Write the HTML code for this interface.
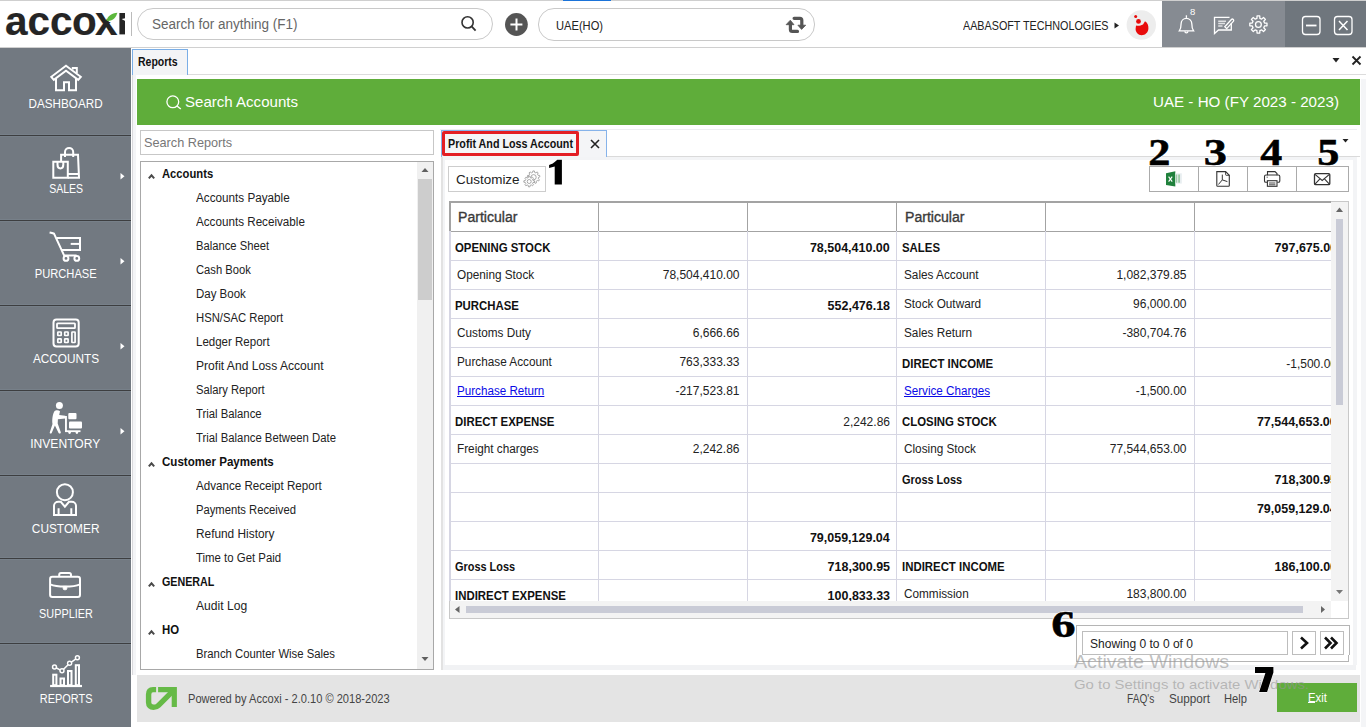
<!DOCTYPE html>
<html><head><meta charset="utf-8"><title>Accoxi Reports</title>
<style>html,body{margin:0;padding:0;width:1366px;height:727px;overflow:hidden;background:#fff;font-family:'Liberation Sans', sans-serif}</style></head>
<body>
<div style="position:relative;width:1366px;height:727px;overflow:hidden">
<div style="position:absolute;left:0px;top:0px;width:1366px;height:47px;background:#fff"></div>
<div style="position:absolute;left:0px;top:0px;width:1366px;height:1px;background:#cfcfcf"></div>
<div style="position:absolute;left:563px;top:0px;width:48px;height:1px;background:#1a73d9"></div>
<div style="position:absolute;left:0px;top:47px;width:1366px;height:1px;background:#d0d0d0"></div>
<svg style="position:absolute;left:0;top:0" width="135" height="47">
<g font-family="Liberation Sans" font-weight="700" font-size="40.5" fill="#252525" stroke="#252525" stroke-width="0.15">
<text x="5" y="34.6">a</text><text x="27.6" y="34.6">c</text><text x="49.9" y="34.6">c</text><text x="72" y="34.6">o</text><text x="95" y="34.6">x</text></g>
<path d="M103 11 L120 11 L120 22 L109 22 Z" fill="#fff"/>
<path d="M106.6 21 C107.5 16 111.5 13.2 117.4 12.8 C116 17.5 113 21.6 106.6 21 Z" fill="#5cb83c"/>
<rect x="119.4" y="13" width="5.6" height="21.4" fill="#252525"/>
<path d="M121.6 18.9 L125.2 18.2 L125.2 21 Z" fill="#fff"/>
</svg>
<div style="position:absolute;left:131px;top:12px;width:1px;height:24px;background:#bbb"></div>
<div style="position:absolute;left:137px;top:8px;width:356px;height:32px;border:1px solid #c9c9c9;border-radius:16px;box-sizing:border-box;background:#fff"></div>
<svg style="position:absolute;left:458;top:13px" width="22" height="22"><circle cx="9.6" cy="9.4" r="5.6" stroke="#333" stroke-width="1.6" fill="none"/><line x1="13.6" y1="13.4" x2="17.6" y2="17.6" stroke="#333" stroke-width="1.8"/></svg>
<svg style="position:absolute;left:504px;top:13px" width="24" height="24"><circle cx="12.4" cy="11.5" r="11.4" fill="#555"/><rect x="11.5" y="5.5" width="2" height="12" fill="#fff"/><rect x="6.4" y="10.5" width="12" height="2" fill="#fff"/></svg>
<div style="position:absolute;left:538px;top:8px;width:277px;height:33px;border:1px solid #c9c9c9;border-radius:16px;box-sizing:border-box;background:#fff"></div>
<svg style="position:absolute;left:780px;top:12px" width="32" height="26">
<path d="M10.4 12 V17.5 C10.4 18.6 11.2 19.4 12.3 19.4 H17.5" stroke="#555" stroke-width="3.2" fill="none" stroke-linecap="round"/>
<path d="M6.1 12.7 L10.3 8.2 L14 12.7 Z" fill="#555" stroke="#555" stroke-width="0.8" stroke-linejoin="round"/>
<path d="M14.1 6.3 H19.9 C21 6.3 21.8 7.1 21.8 8.2 V14" stroke="#555" stroke-width="3.2" fill="none" stroke-linecap="round"/>
<path d="M17.9 13.2 L21.6 17.4 L25.7 13.2 Z" fill="#555" stroke="#555" stroke-width="0.8" stroke-linejoin="round"/>
</svg>
<svg style="position:absolute;left:1113px;top:21px" width="8" height="9"><path d="M1.5 1.5 L6 4.5 L1.5 7.5Z" fill="#222"/></svg>
<svg style="position:absolute;left:1126px;top:10px" width="31" height="31"><circle cx="15.3" cy="15" r="14.7" fill="#ededed"/>
<path d="M10 15.5 C11.5 16 14.5 16 17 14.5 L19 11.2 C21.5 12.5 22.6 15.5 22.4 18.5 C22.2 22.5 19.2 25.2 15.6 25.2 C12 25.2 9.6 22.2 9.6 19 Z" fill="#e80b0b"/>
<circle cx="12.5" cy="11.4" r="2.4" fill="#e80b0b"/><circle cx="9.7" cy="6.5" r="1.5" fill="#e80b0b"/></svg>
<div style="position:absolute;left:1162px;top:1px;width:123px;height:46px;background:#868b92"></div>
<div style="position:absolute;left:1285px;top:1px;width:81px;height:46px;background:#6f767d"></div>
<svg style="position:absolute;left:1162px;top:1px" width="204" height="46">
<g stroke="#fff" stroke-width="1.3" fill="none">
<path d="M24.4 14.3 V16.9"/>
<path d="M17.3 29.9 C18.6 28 19.1 26.5 19.1 22.8 C19.1 19.6 21.5 17.4 24.4 17.4 C27.3 17.4 29.8 19.6 29.8 22.8 C29.8 26.5 30.3 28 31.6 29.9 Z"/>
<path d="M22.9 30.3 A1.5 1.6 0 0 0 25.9 30.3"/>
<path d="M67.5 16.4 H52.5 V32.5 L56.5 29 H69.3 V22"/>
<path d="M56.2 20.3 H64 M56.2 22.5 H63 M56.2 24.9 H60.5" stroke-width="1.5" stroke-opacity="0.75"/>
<path d="M62.8 25.8 L69.4 18.5 C69.9 18 70.8 18 71.3 18.5 C71.8 19 71.8 19.9 71.3 20.4 L64.7 27.6 Z"/>
<path d="M94.93 17.37 L95.04 14.91 L97.76 14.91 L97.87 17.37 L99.69 18.13 L101.51 16.46 L103.44 18.39 L101.77 20.21 L102.53 22.03 L104.99 22.14 L104.99 24.86 L102.53 24.97 L101.77 26.79 L103.44 28.61 L101.51 30.54 L99.69 28.87 L97.87 29.63 L97.76 32.09 L95.04 32.09 L94.93 29.63 L93.11 28.87 L91.29 30.54 L89.36 28.61 L91.03 26.79 L90.27 24.97 L87.81 24.86 L87.81 22.14 L90.27 22.03 L91.03 20.21 L89.36 18.39 L91.29 16.46 L93.11 18.13Z" stroke-linejoin="round"/><circle cx="96.4" cy="23.5" r="2.9"/>
<rect x="140.5" y="15.5" width="17.5" height="18" rx="3"/>
<path d="M144 24.5 H154.5" stroke-width="1.8"/>
<rect x="172.5" y="15.5" width="17.5" height="18" rx="3"/>
<path d="M177 20 L185.5 29 M185.5 20 L177 29" stroke-width="1.5"/>
</g>
<text x="28" y="14" font-family="Liberation Sans" font-size="9.5" fill="#fff">8</text>
</svg>
<div style="position:absolute;left:0px;top:48px;width:131px;height:679px;background:#727981"></div>
<div style="position:absolute;left:0px;top:134px;width:131px;height:1px;background:#778089"></div>
<div style="position:absolute;left:0px;top:136px;width:131px;height:1px;background:#778089"></div>
<div style="position:absolute;left:0px;top:135px;width:131px;height:1px;background:#3d3e40"></div>
<div style="position:absolute;left:0px;top:219px;width:131px;height:1px;background:#778089"></div>
<div style="position:absolute;left:0px;top:221px;width:131px;height:1px;background:#778089"></div>
<div style="position:absolute;left:0px;top:220px;width:131px;height:1px;background:#3d3e40"></div>
<div style="position:absolute;left:0px;top:304px;width:131px;height:1px;background:#778089"></div>
<div style="position:absolute;left:0px;top:306px;width:131px;height:1px;background:#778089"></div>
<div style="position:absolute;left:0px;top:305px;width:131px;height:1px;background:#3d3e40"></div>
<div style="position:absolute;left:0px;top:389px;width:131px;height:1px;background:#778089"></div>
<div style="position:absolute;left:0px;top:391px;width:131px;height:1px;background:#778089"></div>
<div style="position:absolute;left:0px;top:390px;width:131px;height:1px;background:#3d3e40"></div>
<div style="position:absolute;left:0px;top:474px;width:131px;height:1px;background:#778089"></div>
<div style="position:absolute;left:0px;top:476px;width:131px;height:1px;background:#778089"></div>
<div style="position:absolute;left:0px;top:475px;width:131px;height:1px;background:#3d3e40"></div>
<div style="position:absolute;left:0px;top:557px;width:131px;height:1px;background:#778089"></div>
<div style="position:absolute;left:0px;top:559px;width:131px;height:1px;background:#778089"></div>
<div style="position:absolute;left:0px;top:558px;width:131px;height:1px;background:#3d3e40"></div>
<div style="position:absolute;left:0px;top:642px;width:131px;height:1px;background:#778089"></div>
<div style="position:absolute;left:0px;top:644px;width:131px;height:1px;background:#778089"></div>
<div style="position:absolute;left:0px;top:643px;width:131px;height:1px;background:#3d3e40"></div>
<svg style="position:absolute;left:119px;top:171.5px" width="8" height="9"><path d="M1.5 1 L5.5 4.2 L1.5 7.5Z" fill="#fff"/></svg>
<svg style="position:absolute;left:119px;top:256.59999999999997px" width="8" height="9"><path d="M1.5 1 L5.5 4.2 L1.5 7.5Z" fill="#fff"/></svg>
<svg style="position:absolute;left:119px;top:341.5px" width="8" height="9"><path d="M1.5 1 L5.5 4.2 L1.5 7.5Z" fill="#fff"/></svg>
<svg style="position:absolute;left:119px;top:426.59999999999997px" width="8" height="9"><path d="M1.5 1 L5.5 4.2 L1.5 7.5Z" fill="#fff"/></svg>
<svg style="position:absolute;left:0;top:0" width="131" height="727"><g stroke="#fff" stroke-width="2" fill="none" stroke-linejoin="miter">
<path d="M53.8 79.8 L51.3 76.8 L66 65.8 L80.8 76.8 L78.2 79.8 L66 70.8 Z"/><path d="M56 78.5 V90.3 H64 V82.2 H69 V90.3 H76 V78.5"/><path d="M72.8 69.5 V68 H76.8 V73"/>
<path d="M53.3 161.7 H67.8 V177.7 H53.3 Z"/><path d="M57.5 162 V164.8 C57.5 169.6 63.3 169.6 63.3 164.8 V162"/><path d="M61.1 161.7 V154.7 H78 L79 177.7 H67.8"/><path d="M67.8 174 H78.8"/><path d="M65 157 V152 C65 146.5 73.2 146.5 73.2 152 V157"/>
<path d="M49.6 232.4 C51.5 232.8 53 232.9 54 233.6 L64.2 255.6 H76.6"/><path d="M56.6 237.9 H80 V250 H61.5"/><path d="M70.7 243.9 H80"/><circle cx="66" cy="258.4" r="2.4"/><circle cx="76.8" cy="258.4" r="2.4"/>
<rect x="53.5" y="319.4" width="25.2" height="27.2" rx="3"/><rect x="57" y="323.3" width="18" height="4.9" rx="0.6" stroke-width="1.8"/><g stroke-width="1.7"><rect x="57.8" y="332" width="3.4" height="3.5" rx="0.5"/><rect x="64.7" y="332" width="3.4" height="3.5" rx="0.5"/><rect x="57.8" y="338.9" width="3.4" height="3.6" rx="0.5"/><rect x="64.7" y="338.9" width="3.4" height="3.6" rx="0.5"/><rect x="71.9" y="332" width="3.2" height="10.5" rx="0.5"/></g>
<circle cx="64.9" cy="492.2" r="8"/><path d="M54 515.1 V505.8 C54 503.5 56 501.8 58.3 501.8 H60.8 L64.9 506.6 L69 501.8 H71.7 C74 501.8 76 503.5 76 505.8 V515.1 Z"/><path d="M58.6 515 V508.3 M71.3 515 V508.3"/>
<rect x="50.1" y="576.7" width="29.9" height="20.3" rx="2.2"/><path d="M50.2 584.3 C57 587.3 73 587.3 80 584.3"/><path d="M59.2 576.5 V574.8 C59.2 573.6 60 572.9 61 572.9 H69.2 C70.3 572.9 71 573.6 71 574.8 V576.5"/><path d="M63.2 586.4 V588.6 C63.2 589.3 63.6 589.7 64.3 589.7 H65.7 C66.4 589.7 66.8 589.3 66.8 588.6 V586.4 Z" fill="#fff" stroke-width="1"/>
<path d="M50.1 686 H82" stroke-width="2.2"/><rect x="53.2" y="674.7" width="3.2" height="10.5"/><rect x="60.5" y="678.5" width="3.5" height="6.7"/><rect x="68" y="671" width="3.5" height="14.2"/><rect x="75.8" y="665.2" width="3.2" height="20"/>
<path d="M54.5 667 L62 670.8 L69.6 663.3 L77.4 657.8" stroke-width="1.5"/>
</g>
<g fill="#fff"><circle cx="54.5" cy="667" r="2.7"/><circle cx="62" cy="670.8" r="2.7"/><circle cx="69.6" cy="663.3" r="2.7"/><circle cx="77.4" cy="657.8" r="2.7"/></g>
<g fill="#727981"><circle cx="54.5" cy="667" r="1.2"/><circle cx="62" cy="670.8" r="1.2"/><circle cx="69.6" cy="663.3" r="1.2"/><circle cx="77.4" cy="657.8" r="1.2"/></g>
<g fill="#fff">
<circle cx="59.4" cy="405.4" r="3.5"/>
<path d="M54.6 411 C55.5 410.2 58.5 410 60 411.2 L59.2 415 L65.3 415.8 V418.6 L57.9 419.2 L57.7 423.5 L60.8 432.2 C61 433.6 59.2 434 58.6 432.9 L54.9 425.6 L51.7 433 C51 434.1 49.3 433.6 49.8 432.3 L52.5 424 C51.9 420 52.5 414 54.6 411 Z"/>
<rect x="65" y="416" width="1.9" height="16"/><rect x="65" y="430.3" width="15.5" height="1.8"/>
<circle cx="69.6" cy="432.6" r="1.3"/><circle cx="76.9" cy="432.6" r="1.3"/>
<rect x="68.3" y="413" width="8.2" height="6.3" rx="1"/><rect x="69" y="421.5" width="13" height="7" rx="1"/>
</g></svg>
<div style="position:absolute;left:131px;top:48px;width:1235px;height:679px;background:#fff"></div>
<div style="position:absolute;left:132px;top:75px;width:1px;height:600px;background:#d9d9dc"></div>
<div style="position:absolute;left:133px;top:75px;width:3px;height:600px;background:#f4f5f7"></div>
<div style="position:absolute;left:132px;top:49px;width:56px;height:26px;background:#f3f4f6;border:1px solid #7aaee6;border-bottom:none;box-sizing:border-box"></div>
<div style="position:absolute;left:188px;top:74px;width:1178px;height:1px;background:#dcdcdc"></div>
<svg style="position:absolute;left:1330px;top:55px" width="36" height="12"><path d="M2.5 3 H9.5 L6 7.5Z" fill="#222"/><path d="M22.5 1.5 L30.5 9.5 M30.5 1.5 L22.5 9.5" stroke="#222" stroke-width="1.8"/></svg>
<div style="position:absolute;left:137px;top:79px;width:1223px;height:46px;background:#5fad3a"></div>
<svg style="position:absolute;left:164px;top:93px" width="20" height="20"><circle cx="8.8" cy="8.8" r="5.9" stroke="#fff" stroke-width="1.3" fill="none"/><line x1="13" y1="13" x2="16.8" y2="16" stroke="#fff" stroke-width="1.4"/></svg>
<div style="position:absolute;left:1361px;top:79px;width:5px;height:648px;background:#f4f5f7"></div>
<div style="position:absolute;left:140px;top:130px;width:294px;height:25px;border:1px solid #c7c7c7;box-sizing:border-box;background:#fff"></div>
<div style="position:absolute;left:140px;top:161px;width:294px;height:509px;border:1px solid #a8a8a8;box-sizing:border-box;background:#fff"></div>
<div style="position:absolute;left:417px;top:162px;width:16px;height:507px;background:#f0f0f0"></div>
<div style="position:absolute;left:418px;top:179px;width:14px;height:121px;background:#cdcdcd"></div>
<svg style="position:absolute;left:417px;top:164px" width="16" height="505"><path d="M4.5 8 L8 4 L11.5 8Z" fill="#606060"/><path d="M4.5 493 L8 497 L11.5 493Z" fill="#606060"/></svg>
<svg style="position:absolute;left:140px;top:160px" width="30" height="500"><path d="M8.8 18.3 L11.5 15.3 L14.2 18.3" stroke="#4a4a4a" stroke-width="2" fill="none"/><path d="M8.8 306.3 L11.5 303.3 L14.2 306.3" stroke="#4a4a4a" stroke-width="2" fill="none"/><path d="M8.8 426.3 L11.5 423.3 L14.2 426.3" stroke="#4a4a4a" stroke-width="2" fill="none"/><path d="M8.8 474.3 L11.5 471.3 L14.2 474.3" stroke="#4a4a4a" stroke-width="2" fill="none"/></svg>
<div style="position:absolute;left:440px;top:129px;width:917px;height:1px;background:#eeeff1"></div>
<div style="position:absolute;left:441px;top:130px;width:166px;height:27px;background:#f4f5f7;border:1px solid #86b3ea;border-bottom:none;box-sizing:border-box"></div>
<div style="position:absolute;left:607px;top:156px;width:753px;height:1px;background:#dadada"></div>
<div style="position:absolute;left:442px;top:131px;width:137px;height:24.5px;border:3px solid #e31e24;border-radius:2px;box-sizing:border-box"></div>
<svg style="position:absolute;left:589px;top:138px" width="12" height="12"><path d="M2 2 L10 10 M10 2 L2 10" stroke="#222" stroke-width="1.6"/></svg>
<div style="position:absolute;left:441px;top:157px;width:2px;height:513px;background:#e2e2e2"></div>
<div style="position:absolute;left:443px;top:157px;width:2px;height:508px;background:#f3f4f6"></div>
<div style="position:absolute;left:443px;top:157px;width:910px;height:2.5px;background:#f3f4f6"></div>
<div style="position:absolute;left:443px;top:665px;width:913px;height:5px;background:#f1f2f4"></div>
<div style="position:absolute;left:1353px;top:157px;width:4px;height:508px;background:#f3f4f6"></div>
<div style="position:absolute;left:448px;top:166px;width:98px;height:26px;border:1px solid #cdcdcd;box-sizing:border-box;background:#fff"></div>
<svg style="position:absolute;left:515px;top:164px" width="30" height="30"><g stroke="#9a9a9a" stroke-width="0.85" stroke-linejoin="round"><path d="M17.58 8.41 L17.85 6.94 L19.35 6.94 L19.62 8.41 L20.90 8.87 L22.05 7.93 L23.19 8.89 L22.46 10.18 L23.14 11.36 L24.63 11.38 L24.89 12.85 L23.50 13.37 L23.26 14.71 L24.39 15.68 L23.64 16.97 L22.24 16.48 L21.20 17.36 L21.44 18.82 L20.04 19.33 L19.28 18.05 L17.92 18.05 L17.16 19.33 L15.76 18.82 L16.00 17.36 L14.96 16.48 L13.56 16.97 L12.81 15.68 L13.94 14.71 L13.70 13.37 L12.31 12.85 L12.57 11.38 L14.06 11.36 L14.74 10.18 L14.01 8.89 L15.15 7.93 L16.30 8.87Z" fill="#fff"/><circle cx="18.6" cy="13.2" r="2.6" fill="none"/><path d="M13.27 13.61 L13.48 12.15 L14.92 12.15 L15.13 13.61 L16.29 14.09 L17.48 13.21 L18.49 14.22 L17.61 15.41 L18.09 16.57 L19.55 16.78 L19.55 18.22 L18.09 18.43 L17.61 19.59 L18.49 20.78 L17.48 21.79 L16.29 20.91 L15.13 21.39 L14.92 22.85 L13.48 22.85 L13.27 21.39 L12.11 20.91 L10.92 21.79 L9.91 20.78 L10.79 19.59 L10.31 18.43 L8.85 18.22 L8.85 16.78 L10.31 16.57 L10.79 15.41 L9.91 14.22 L10.92 13.21 L12.11 14.09Z" fill="#fff"/><circle cx="14.2" cy="17.5" r="2" fill="none"/></g></svg>
<div style="position:absolute;left:1149px;top:166px;width:200px;height:26px;border:1px solid #ababab;box-sizing:border-box;background:#fff"></div>
<div style="position:absolute;left:1198px;top:166px;width:1px;height:26px;background:#ababab"></div>
<div style="position:absolute;left:1247px;top:166px;width:1px;height:26px;background:#ababab"></div>
<div style="position:absolute;left:1296px;top:166px;width:1px;height:26px;background:#ababab"></div>
<svg style="position:absolute;left:1149px;top:166px" width="200" height="26">
<path d="M17 7.2 L26.3 5.3 V20.6 L17 19 Z" fill="#20813c"/><rect x="26.3" y="7.3" width="6.5" height="10.3" fill="#e8eef0"/><rect x="26.6" y="8.5" width="1.6" height="8.2" fill="#9fcda8"/><rect x="29.2" y="8.5" width="1.8" height="8.2" fill="#9fcda8"/>
<path d="M19.6 10.6 L23.2 15.6 M23.2 10.6 L19.6 15.6" stroke="#fff" stroke-width="1.1"/>
<g stroke="#333" stroke-width="1.1" fill="none">
<path d="M67.8 5.6 H76.6 L80.3 9.3 V19.5 C80.3 20 80 20.2 79.5 20.2 H68.6 C68.1 20.2 67.8 19.9 67.8 19.4 Z"/><path d="M76.6 5.6 V8.7 C76.6 9 76.8 9.3 77.1 9.3 H80.3" stroke-width="0.9"/>
<path d="M73.3 8.6 V13.9 L69.4 18.5 M73.3 13.9 L78.4 15.6" stroke-width="1"/>
<path d="M118.5 9.2 V5.6 H126 L128 7.6 V9.2"/><path d="M118 16.3 H116.8 C116 16.3 115.5 15.8 115.5 15 V10.5 C115.5 9.6 116.1 9 117 9 H129.3 C130.2 9 130.8 9.6 130.8 10.5 V15 C130.8 15.8 130.3 16.3 129.5 16.3 H128.3"/><rect x="118.4" y="14.7" width="9.6" height="5.6" fill="#fff"/><path d="M120 17 H126.4 M120 18.8 H126.4" stroke-width="0.9"/><path d="M117.5 11.2 H119" stroke-width="0.7"/>
<rect x="165.5" y="7.6" width="15.3" height="11.1" rx="1.2" stroke-width="1.3"/><path d="M166 8.3 L173.2 14.5 L180.4 8.3 M166 18.2 L170.7 13.2 M180.4 18.2 L175.7 13.2"/>
</g></svg>
<svg style="position:absolute;left:1342px;top:138px" width="8" height="6"><path d="M0.5 1 H6.5 L3.5 4.5Z" fill="#222"/></svg>
<div style="position:absolute;left:449px;top:201px;width:900px;height:418px;border:1px solid #c8c8c8;box-sizing:border-box;background:#fff"></div>
<div style="position:absolute;left:449px;top:201px;width:882px;height:2px;background:#a3a3a3"></div>
<div style="position:absolute;left:449px;top:230.5px;width:882px;height:1.5px;background:#a3a3a3"></div>
<div style="position:absolute;left:449px;top:201px;width:1.5px;height:30px;background:#a3a3a3"></div>
<div style="position:absolute;left:598px;top:201px;width:1px;height:30px;background:#a3a3a3"></div>
<div style="position:absolute;left:747px;top:201px;width:1px;height:30px;background:#a3a3a3"></div>
<div style="position:absolute;left:896px;top:201px;width:1px;height:30px;background:#a3a3a3"></div>
<div style="position:absolute;left:1045px;top:201px;width:1px;height:30px;background:#a3a3a3"></div>
<div style="position:absolute;left:1194px;top:201px;width:1px;height:30px;background:#a3a3a3"></div>
<div style="position:absolute;left:450px;top:260px;width:881px;height:1px;background:#d6d6e3"></div>
<div style="position:absolute;left:450px;top:289px;width:881px;height:1px;background:#d6d6e3"></div>
<div style="position:absolute;left:450px;top:318px;width:881px;height:1px;background:#d6d6e3"></div>
<div style="position:absolute;left:450px;top:347px;width:881px;height:1px;background:#d6d6e3"></div>
<div style="position:absolute;left:450px;top:376px;width:881px;height:1px;background:#d6d6e3"></div>
<div style="position:absolute;left:450px;top:405px;width:881px;height:1px;background:#d6d6e3"></div>
<div style="position:absolute;left:450px;top:434px;width:881px;height:1px;background:#d6d6e3"></div>
<div style="position:absolute;left:450px;top:463px;width:881px;height:1px;background:#d6d6e3"></div>
<div style="position:absolute;left:450px;top:492px;width:881px;height:1px;background:#d6d6e3"></div>
<div style="position:absolute;left:450px;top:521px;width:881px;height:1px;background:#d6d6e3"></div>
<div style="position:absolute;left:450px;top:550px;width:881px;height:1px;background:#d6d6e3"></div>
<div style="position:absolute;left:450px;top:579px;width:881px;height:1px;background:#d6d6e3"></div>
<div style="position:absolute;left:598px;top:231px;width:1px;height:370px;background:#d6d6e3"></div>
<div style="position:absolute;left:747px;top:231px;width:1px;height:370px;background:#d6d6e3"></div>
<div style="position:absolute;left:896px;top:231px;width:1px;height:370px;background:#d6d6e3"></div>
<div style="position:absolute;left:1045px;top:231px;width:1px;height:370px;background:#d6d6e3"></div>
<div style="position:absolute;left:1194px;top:231px;width:1px;height:370px;background:#d6d6e3"></div>
<div style="position:absolute;left:449px;top:231px;width:1.5px;height:370px;background:#d6d6e3"></div>
<div style="position:absolute;left:152.00px;top:17.17px;font-family:'Liberation Sans', sans-serif;font-size:14px;font-weight:400;color:#666;line-height:1;white-space:nowrap;transform:scaleX(0.9638);transform-origin:left top;">Search for anything (F1)</div>
<div style="position:absolute;left:555.50px;top:18.50px;font-family:'Liberation Sans', sans-serif;font-size:13px;font-weight:400;color:#222;line-height:1;white-space:nowrap;transform:scaleX(0.8562);transform-origin:left top;">UAE(HO)</div>
<div style="position:absolute;left:962.50px;top:19.20px;font-family:'Liberation Sans', sans-serif;font-size:13px;font-weight:400;color:#222;line-height:1;white-space:nowrap;transform:scaleX(0.8277);transform-origin:left top;">AABASOFT TECHNOLOGIES</div>
<div style="position:absolute;left:26.11px;top:97.57px;font-family:'Liberation Sans', sans-serif;font-size:12.5px;font-weight:400;color:#fff;line-height:1;white-space:nowrap;transform:scaleX(0.9345);transform-origin:center top;">DASHBOARD</div>
<div style="position:absolute;left:45.54px;top:183.17px;font-family:'Liberation Sans', sans-serif;font-size:12.5px;font-weight:400;color:#fff;line-height:1;white-space:nowrap;transform:scaleX(0.8434);transform-origin:center top;">SALES</div>
<div style="position:absolute;left:30.97px;top:268.27px;font-family:'Liberation Sans', sans-serif;font-size:12.5px;font-weight:400;color:#fff;line-height:1;white-space:nowrap;transform:scaleX(0.8925);transform-origin:center top;">PURCHASE</div>
<div style="position:absolute;left:30.62px;top:353.17px;font-family:'Liberation Sans', sans-serif;font-size:12.5px;font-weight:400;color:#fff;line-height:1;white-space:nowrap;transform:scaleX(0.9450);transform-origin:center top;">ACCOUNTS</div>
<div style="position:absolute;left:29.46px;top:438.27px;font-family:'Liberation Sans', sans-serif;font-size:12.5px;font-weight:400;color:#fff;line-height:1;white-space:nowrap;transform:scaleX(0.9657);transform-origin:center top;">INVENTORY</div>
<div style="position:absolute;left:30.04px;top:523.17px;font-family:'Liberation Sans', sans-serif;font-size:12.5px;font-weight:400;color:#fff;line-height:1;white-space:nowrap;transform:scaleX(0.9479);transform-origin:center top;">CUSTOMER</div>
<div style="position:absolute;left:34.78px;top:608.27px;font-family:'Liberation Sans', sans-serif;font-size:12.5px;font-weight:400;color:#fff;line-height:1;white-space:nowrap;transform:scaleX(0.8683);transform-origin:center top;">SUPPLIER</div>
<div style="position:absolute;left:35.60px;top:692.67px;font-family:'Liberation Sans', sans-serif;font-size:12.5px;font-weight:400;color:#fff;line-height:1;white-space:nowrap;transform:scaleX(0.8754);transform-origin:center top;">REPORTS</div>
<div style="position:absolute;left:138.30px;top:56.43px;font-family:'Liberation Sans', sans-serif;font-size:12px;font-weight:700;color:#111;line-height:1;white-space:nowrap;transform:scaleX(0.8755);transform-origin:left top;">Reports</div>
<div style="position:absolute;left:184.70px;top:94.44px;font-family:'Liberation Sans', sans-serif;font-size:15px;font-weight:400;color:#fff;line-height:1;white-space:nowrap;transform:scaleX(1.0037);transform-origin:left top;">Search Accounts</div>
<div style="position:absolute;left:1154.83px;top:94.44px;font-family:'Liberation Sans', sans-serif;font-size:15px;font-weight:400;color:#fff;line-height:1;white-space:nowrap;transform:scaleX(1.0110);transform-origin:right top;">UAE - HO (FY 2023 - 2023)</div>
<div style="position:absolute;left:144.30px;top:136.30px;font-family:'Liberation Sans', sans-serif;font-size:13px;font-weight:400;color:#777;line-height:1;white-space:nowrap;transform:scaleX(0.9764);transform-origin:left top;">Search Reports</div>
<div style="position:absolute;left:162.20px;top:167.00px;font-family:'Liberation Sans', sans-serif;font-size:13px;font-weight:700;color:#111;line-height:1;white-space:nowrap;transform:scaleX(0.8644);transform-origin:left top;">Accounts</div>
<div style="position:absolute;left:196.20px;top:191.97px;font-family:'Liberation Sans', sans-serif;font-size:12.5px;font-weight:400;color:#222;line-height:1;white-space:nowrap;transform:scaleX(0.9364);transform-origin:left top;">Accounts Payable</div>
<div style="position:absolute;left:196.20px;top:215.97px;font-family:'Liberation Sans', sans-serif;font-size:12.5px;font-weight:400;color:#222;line-height:1;white-space:nowrap;transform:scaleX(0.9329);transform-origin:left top;">Accounts Receivable</div>
<div style="position:absolute;left:196.20px;top:239.97px;font-family:'Liberation Sans', sans-serif;font-size:12.5px;font-weight:400;color:#222;line-height:1;white-space:nowrap;transform:scaleX(0.8978);transform-origin:left top;">Balance Sheet</div>
<div style="position:absolute;left:196.20px;top:263.97px;font-family:'Liberation Sans', sans-serif;font-size:12.5px;font-weight:400;color:#222;line-height:1;white-space:nowrap;transform:scaleX(0.8961);transform-origin:left top;">Cash Book</div>
<div style="position:absolute;left:196.20px;top:287.97px;font-family:'Liberation Sans', sans-serif;font-size:12.5px;font-weight:400;color:#222;line-height:1;white-space:nowrap;transform:scaleX(0.9188);transform-origin:left top;">Day Book</div>
<div style="position:absolute;left:196.20px;top:311.97px;font-family:'Liberation Sans', sans-serif;font-size:12.5px;font-weight:400;color:#222;line-height:1;white-space:nowrap;transform:scaleX(0.9030);transform-origin:left top;">HSN/SAC Report</div>
<div style="position:absolute;left:196.20px;top:335.97px;font-family:'Liberation Sans', sans-serif;font-size:12.5px;font-weight:400;color:#222;line-height:1;white-space:nowrap;transform:scaleX(0.9209);transform-origin:left top;">Ledger Report</div>
<div style="position:absolute;left:196.20px;top:359.97px;font-family:'Liberation Sans', sans-serif;font-size:12.5px;font-weight:400;color:#222;line-height:1;white-space:nowrap;transform:scaleX(0.9657);transform-origin:left top;">Profit And Loss Account</div>
<div style="position:absolute;left:196.20px;top:383.97px;font-family:'Liberation Sans', sans-serif;font-size:12.5px;font-weight:400;color:#222;line-height:1;white-space:nowrap;transform:scaleX(0.8975);transform-origin:left top;">Salary Report</div>
<div style="position:absolute;left:196.20px;top:407.97px;font-family:'Liberation Sans', sans-serif;font-size:12.5px;font-weight:400;color:#222;line-height:1;white-space:nowrap;transform:scaleX(0.9048);transform-origin:left top;">Trial Balance</div>
<div style="position:absolute;left:196.20px;top:431.97px;font-family:'Liberation Sans', sans-serif;font-size:12.5px;font-weight:400;color:#222;line-height:1;white-space:nowrap;transform:scaleX(0.9062);transform-origin:left top;">Trial Balance Between Date</div>
<div style="position:absolute;left:162.20px;top:455.00px;font-family:'Liberation Sans', sans-serif;font-size:13px;font-weight:700;color:#111;line-height:1;white-space:nowrap;transform:scaleX(0.8893);transform-origin:left top;">Customer Payments</div>
<div style="position:absolute;left:196.20px;top:479.97px;font-family:'Liberation Sans', sans-serif;font-size:12.5px;font-weight:400;color:#222;line-height:1;white-space:nowrap;transform:scaleX(0.9284);transform-origin:left top;">Advance Receipt Report</div>
<div style="position:absolute;left:196.20px;top:503.97px;font-family:'Liberation Sans', sans-serif;font-size:12.5px;font-weight:400;color:#222;line-height:1;white-space:nowrap;transform:scaleX(0.8995);transform-origin:left top;">Payments Received</div>
<div style="position:absolute;left:196.20px;top:527.97px;font-family:'Liberation Sans', sans-serif;font-size:12.5px;font-weight:400;color:#222;line-height:1;white-space:nowrap;transform:scaleX(0.9481);transform-origin:left top;">Refund History</div>
<div style="position:absolute;left:196.20px;top:551.97px;font-family:'Liberation Sans', sans-serif;font-size:12.5px;font-weight:400;color:#222;line-height:1;white-space:nowrap;transform:scaleX(0.9129);transform-origin:left top;">Time to Get Paid</div>
<div style="position:absolute;left:162.20px;top:575.00px;font-family:'Liberation Sans', sans-serif;font-size:13px;font-weight:700;color:#111;line-height:1;white-space:nowrap;transform:scaleX(0.8244);transform-origin:left top;">GENERAL</div>
<div style="position:absolute;left:196.20px;top:599.97px;font-family:'Liberation Sans', sans-serif;font-size:12.5px;font-weight:400;color:#222;line-height:1;white-space:nowrap;transform:scaleX(0.9692);transform-origin:left top;">Audit Log</div>
<div style="position:absolute;left:162.20px;top:623.00px;font-family:'Liberation Sans', sans-serif;font-size:13px;font-weight:700;color:#111;line-height:1;white-space:nowrap;transform:scaleX(0.8769);transform-origin:left top;">HO</div>
<div style="position:absolute;left:196.20px;top:647.97px;font-family:'Liberation Sans', sans-serif;font-size:12.5px;font-weight:400;color:#222;line-height:1;white-space:nowrap;transform:scaleX(0.9053);transform-origin:left top;">Branch Counter Wise Sales</div>
<div style="position:absolute;left:448.00px;top:137.63px;font-family:'Liberation Sans', sans-serif;font-size:12px;font-weight:700;color:#111;line-height:1;white-space:nowrap;transform:scaleX(0.8943);transform-origin:left top;">Profit And Loss Account</div>
<div style="position:absolute;left:456.30px;top:172.84px;font-family:'Liberation Sans', sans-serif;font-size:13.5px;font-weight:400;color:#222;line-height:1;white-space:nowrap;transform:scaleX(0.9972);transform-origin:left top;">Customize</div>
<div style="position:absolute;left:457.50px;top:210.47px;font-family:'Liberation Sans', sans-serif;font-size:14px;font-weight:400;color:#3a3a3a;line-height:1;white-space:nowrap;transform:scaleX(1.0044);transform-origin:left top;-webkit-text-stroke:0.35px #3a3a3a;">Particular</div>
<div style="position:absolute;left:904.50px;top:210.47px;font-family:'Liberation Sans', sans-serif;font-size:14px;font-weight:400;color:#3a3a3a;line-height:1;white-space:nowrap;transform:scaleX(1.0044);transform-origin:left top;-webkit-text-stroke:0.35px #3a3a3a;">Particular</div>
<div style="position:absolute;left:455.40px;top:241.83px;font-family:'Liberation Sans', sans-serif;font-size:12px;font-weight:700;color:#111;line-height:1;white-space:nowrap;transform:scaleX(0.9500);transform-origin:left top;">OPENING STOCK</div>
<div style="position:absolute;left:813.25px;top:241.63px;font-family:'Liberation Sans', sans-serif;font-size:12px;font-weight:700;color:#111;line-height:1;white-space:nowrap;transform:scaleX(1.0400);transform-origin:right top;">78,504,410.00</div>
<div style="position:absolute;left:457.20px;top:269.43px;font-family:'Liberation Sans', sans-serif;font-size:12px;font-weight:400;color:#222;line-height:1;white-space:nowrap;transform:scaleX(0.9800);transform-origin:left top;">Opening Stock</div>
<div style="position:absolute;left:662.75px;top:269.43px;font-family:'Liberation Sans', sans-serif;font-size:12px;font-weight:400;color:#222;line-height:1;white-space:nowrap;">78,504,410.00</div>
<div style="position:absolute;left:455.40px;top:299.83px;font-family:'Liberation Sans', sans-serif;font-size:12px;font-weight:700;color:#111;line-height:1;white-space:nowrap;transform:scaleX(0.9500);transform-origin:left top;">PURCHASE</div>
<div style="position:absolute;left:829.94px;top:299.63px;font-family:'Liberation Sans', sans-serif;font-size:12px;font-weight:700;color:#111;line-height:1;white-space:nowrap;transform:scaleX(1.0400);transform-origin:right top;">552,476.18</div>
<div style="position:absolute;left:457.20px;top:327.43px;font-family:'Liberation Sans', sans-serif;font-size:12px;font-weight:400;color:#222;line-height:1;white-space:nowrap;transform:scaleX(0.9800);transform-origin:left top;">Customs Duty</div>
<div style="position:absolute;left:692.78px;top:327.43px;font-family:'Liberation Sans', sans-serif;font-size:12px;font-weight:400;color:#222;line-height:1;white-space:nowrap;">6,666.66</div>
<div style="position:absolute;left:457.20px;top:356.43px;font-family:'Liberation Sans', sans-serif;font-size:12px;font-weight:400;color:#222;line-height:1;white-space:nowrap;transform:scaleX(0.9800);transform-origin:left top;">Purchase Account</div>
<div style="position:absolute;left:679.44px;top:356.43px;font-family:'Liberation Sans', sans-serif;font-size:12px;font-weight:400;color:#222;line-height:1;white-space:nowrap;">763,333.33</div>
<div style="position:absolute;left:457.20px;top:385.43px;font-family:'Liberation Sans', sans-serif;font-size:12px;font-weight:400;color:#0a0ae6;line-height:1;white-space:nowrap;transform:scaleX(0.9700);transform-origin:left top;text-decoration:underline;">Purchase Return</div>
<div style="position:absolute;left:675.44px;top:385.43px;font-family:'Liberation Sans', sans-serif;font-size:12px;font-weight:400;color:#222;line-height:1;white-space:nowrap;">-217,523.81</div>
<div style="position:absolute;left:455.40px;top:415.83px;font-family:'Liberation Sans', sans-serif;font-size:12px;font-weight:700;color:#111;line-height:1;white-space:nowrap;transform:scaleX(0.9500);transform-origin:left top;">DIRECT EXPENSE</div>
<div style="position:absolute;left:843.28px;top:415.83px;font-family:'Liberation Sans', sans-serif;font-size:12px;font-weight:400;color:#222;line-height:1;white-space:nowrap;">2,242.86</div>
<div style="position:absolute;left:457.20px;top:443.43px;font-family:'Liberation Sans', sans-serif;font-size:12px;font-weight:400;color:#222;line-height:1;white-space:nowrap;transform:scaleX(0.9800);transform-origin:left top;">Freight charges</div>
<div style="position:absolute;left:692.78px;top:443.43px;font-family:'Liberation Sans', sans-serif;font-size:12px;font-weight:400;color:#222;line-height:1;white-space:nowrap;">2,242.86</div>
<div style="position:absolute;left:813.25px;top:531.63px;font-family:'Liberation Sans', sans-serif;font-size:12px;font-weight:700;color:#111;line-height:1;white-space:nowrap;transform:scaleX(1.0400);transform-origin:right top;">79,059,129.04</div>
<div style="position:absolute;left:455.40px;top:560.83px;font-family:'Liberation Sans', sans-serif;font-size:12px;font-weight:700;color:#111;line-height:1;white-space:nowrap;transform:scaleX(0.9100);transform-origin:left top;">Gross Loss</div>
<div style="position:absolute;left:829.94px;top:560.63px;font-family:'Liberation Sans', sans-serif;font-size:12px;font-weight:700;color:#111;line-height:1;white-space:nowrap;transform:scaleX(1.0400);transform-origin:right top;">718,300.95</div>
<div style="position:absolute;left:455.40px;top:589.83px;font-family:'Liberation Sans', sans-serif;font-size:12px;font-weight:700;color:#111;line-height:1;white-space:nowrap;transform:scaleX(0.9500);transform-origin:left top;">INDIRECT EXPENSE</div>
<div style="position:absolute;left:829.94px;top:589.63px;font-family:'Liberation Sans', sans-serif;font-size:12px;font-weight:700;color:#111;line-height:1;white-space:nowrap;transform:scaleX(1.0400);transform-origin:right top;">100,833.33</div>
<div style="position:absolute;left:902.40px;top:241.83px;font-family:'Liberation Sans', sans-serif;font-size:12px;font-weight:700;color:#111;line-height:1;white-space:nowrap;transform:scaleX(0.9500);transform-origin:left top;">SALES</div>
<div style="position:absolute;left:1276.94px;top:241.63px;font-family:'Liberation Sans', sans-serif;font-size:12px;font-weight:700;color:#111;line-height:1;white-space:nowrap;transform:scaleX(1.0400);transform-origin:right top;">797,675.00</div>
<div style="position:absolute;left:904.20px;top:269.43px;font-family:'Liberation Sans', sans-serif;font-size:12px;font-weight:400;color:#222;line-height:1;white-space:nowrap;transform:scaleX(0.9800);transform-origin:left top;">Sales Account</div>
<div style="position:absolute;left:1116.42px;top:269.43px;font-family:'Liberation Sans', sans-serif;font-size:12px;font-weight:400;color:#222;line-height:1;white-space:nowrap;">1,082,379.85</div>
<div style="position:absolute;left:904.20px;top:298.43px;font-family:'Liberation Sans', sans-serif;font-size:12px;font-weight:400;color:#222;line-height:1;white-space:nowrap;transform:scaleX(0.9800);transform-origin:left top;">Stock Outward</div>
<div style="position:absolute;left:1133.11px;top:298.43px;font-family:'Liberation Sans', sans-serif;font-size:12px;font-weight:400;color:#222;line-height:1;white-space:nowrap;">96,000.00</div>
<div style="position:absolute;left:904.20px;top:327.43px;font-family:'Liberation Sans', sans-serif;font-size:12px;font-weight:400;color:#222;line-height:1;white-space:nowrap;transform:scaleX(0.9800);transform-origin:left top;">Sales Return</div>
<div style="position:absolute;left:1122.44px;top:327.43px;font-family:'Liberation Sans', sans-serif;font-size:12px;font-weight:400;color:#222;line-height:1;white-space:nowrap;">-380,704.76</div>
<div style="position:absolute;left:902.40px;top:357.83px;font-family:'Liberation Sans', sans-serif;font-size:12px;font-weight:700;color:#111;line-height:1;white-space:nowrap;transform:scaleX(0.9500);transform-origin:left top;">DIRECT INCOME</div>
<div style="position:absolute;left:1286.28px;top:357.83px;font-family:'Liberation Sans', sans-serif;font-size:12px;font-weight:400;color:#222;line-height:1;white-space:nowrap;">-1,500.00</div>
<div style="position:absolute;left:904.20px;top:385.43px;font-family:'Liberation Sans', sans-serif;font-size:12px;font-weight:400;color:#0a0ae6;line-height:1;white-space:nowrap;transform:scaleX(0.9700);transform-origin:left top;text-decoration:underline;">Service Charges</div>
<div style="position:absolute;left:1135.78px;top:385.43px;font-family:'Liberation Sans', sans-serif;font-size:12px;font-weight:400;color:#222;line-height:1;white-space:nowrap;">-1,500.00</div>
<div style="position:absolute;left:902.40px;top:415.83px;font-family:'Liberation Sans', sans-serif;font-size:12px;font-weight:700;color:#111;line-height:1;white-space:nowrap;transform:scaleX(0.9500);transform-origin:left top;">CLOSING STOCK</div>
<div style="position:absolute;left:1260.25px;top:415.63px;font-family:'Liberation Sans', sans-serif;font-size:12px;font-weight:700;color:#111;line-height:1;white-space:nowrap;transform:scaleX(1.0400);transform-origin:right top;">77,544,653.00</div>
<div style="position:absolute;left:904.20px;top:443.43px;font-family:'Liberation Sans', sans-serif;font-size:12px;font-weight:400;color:#222;line-height:1;white-space:nowrap;transform:scaleX(0.9800);transform-origin:left top;">Closing Stock</div>
<div style="position:absolute;left:1109.75px;top:443.43px;font-family:'Liberation Sans', sans-serif;font-size:12px;font-weight:400;color:#222;line-height:1;white-space:nowrap;">77,544,653.00</div>
<div style="position:absolute;left:902.40px;top:473.83px;font-family:'Liberation Sans', sans-serif;font-size:12px;font-weight:700;color:#111;line-height:1;white-space:nowrap;transform:scaleX(0.9100);transform-origin:left top;">Gross Loss</div>
<div style="position:absolute;left:1276.94px;top:473.63px;font-family:'Liberation Sans', sans-serif;font-size:12px;font-weight:700;color:#111;line-height:1;white-space:nowrap;transform:scaleX(1.0400);transform-origin:right top;">718,300.95</div>
<div style="position:absolute;left:1260.25px;top:502.63px;font-family:'Liberation Sans', sans-serif;font-size:12px;font-weight:700;color:#111;line-height:1;white-space:nowrap;transform:scaleX(1.0400);transform-origin:right top;">79,059,129.04</div>
<div style="position:absolute;left:902.40px;top:560.83px;font-family:'Liberation Sans', sans-serif;font-size:12px;font-weight:700;color:#111;line-height:1;white-space:nowrap;transform:scaleX(0.9500);transform-origin:left top;">INDIRECT INCOME</div>
<div style="position:absolute;left:1276.94px;top:560.63px;font-family:'Liberation Sans', sans-serif;font-size:12px;font-weight:700;color:#111;line-height:1;white-space:nowrap;transform:scaleX(1.0400);transform-origin:right top;">186,100.00</div>
<div style="position:absolute;left:904.20px;top:588.43px;font-family:'Liberation Sans', sans-serif;font-size:12px;font-weight:400;color:#222;line-height:1;white-space:nowrap;transform:scaleX(0.9800);transform-origin:left top;">Commission</div>
<div style="position:absolute;left:1126.44px;top:588.43px;font-family:'Liberation Sans', sans-serif;font-size:12px;font-weight:400;color:#222;line-height:1;white-space:nowrap;">183,800.00</div>
<div style="position:absolute;left:1331px;top:202px;width:17px;height:399px;background:#f3f3f3"></div>
<div style="position:absolute;left:1336px;top:219px;width:7px;height:186px;background:#c9cbd6"></div>
<svg style="position:absolute;left:1331px;top:202px" width="17" height="399"><path d="M5 10 L8.5 5.5 L12 10Z" fill="#666"/><path d="M5 388 L8.5 392 L12 388Z" fill="#777"/></svg>
<div style="position:absolute;left:450px;top:601px;width:881px;height:17px;background:#f3f3f3"></div>
<div style="position:absolute;left:466px;top:606px;width:837px;height:7px;background:#c9cbd6"></div>
<div style="position:absolute;left:1331px;top:601px;width:17px;height:17px;background:#fff"></div>
<svg style="position:absolute;left:450px;top:601px" width="881" height="17"><path d="M9.5 8.5 L4.5 8.5 M9.5 5 L5 8.5 L9.5 12Z" fill="#666"/><path d="M871 5 L875 8.5 L871 12Z" fill="#666"/></svg>
<div style="position:absolute;left:1076px;top:625px;width:273px;height:37px;border:1px solid #b5b5b5;border-right:none;box-sizing:border-box"></div>
<div style="position:absolute;left:1349px;top:625px;width:1px;height:30px;background:#b5b5b5"></div>
<div style="position:absolute;left:1348px;top:655px;width:1px;height:7px;background:#b5b5b5"></div>
<div style="position:absolute;left:1082px;top:631px;width:206px;height:24px;border:1px solid #bdbdbd;box-sizing:border-box;background:#fff"></div>
<div style="position:absolute;left:1292px;top:631px;width:24px;height:24px;border:1px solid #bdbdbd;box-sizing:border-box;background:#fff"></div>
<div style="position:absolute;left:1320px;top:631px;width:24px;height:24px;border:1px solid #bdbdbd;box-sizing:border-box;background:#fff"></div>
<svg style="position:absolute;left:1292px;top:631px" width="60" height="24"><path d="M9 6.5 L15 12 L9 17.5" stroke="#111" stroke-width="2.6" fill="none"/><path d="M33 6.5 L38.5 12 L33 17.5 M39 6.5 L44.5 12 L39 17.5" stroke="#111" stroke-width="2.6" fill="none"/></svg>
<div style="position:absolute;left:137px;top:675px;width:1223px;height:47px;background:#e4e4e4"></div>
<svg style="position:absolute;left:140px;top:680px" width="45" height="36"><path d="M16.1 9.6 H13 C10 9.6 8.6 11.2 8.6 14.5 V22.5 C8.6 25.5 10.5 27.3 13.5 27.3 C15.5 27.3 17 26.8 18.5 25.3 L33 10.8" stroke="#66ba47" stroke-width="5.4" fill="none"/><path d="M18.1 6.9 H36.9 V27 H31.7 V12.3 H18.1 Z" fill="#66ba47"/></svg>
<div style="position:absolute;left:1277px;top:683px;width:80px;height:29px;background:#5fad3a"></div>
<div style="position:absolute;left:1308.3px;top:702px;width:7px;height:1.3px;background:#fff"></div>
<div style="position:absolute;left:1149.78px;top:133.84px;font-family:'Liberation Serif', serif;font-size:37.5px;font-weight:700;color:#000;line-height:1;white-space:nowrap;transform:scaleX(1.1817);transform-origin:center top;-webkit-text-stroke:0.5px #000;text-shadow:1px 0 0 #fff,-1px 0 0 #fff,0 1px 0 #fff,0 -1px 0 #fff;">2</div>
<div style="position:absolute;left:1205.62px;top:133.84px;font-family:'Liberation Serif', serif;font-size:37.5px;font-weight:700;color:#000;line-height:1;white-space:nowrap;transform:scaleX(1.2373);transform-origin:center top;-webkit-text-stroke:0.5px #000;text-shadow:1px 0 0 #fff,-1px 0 0 #fff,0 1px 0 #fff,0 -1px 0 #fff;">3</div>
<div style="position:absolute;left:1262.12px;top:133.84px;font-family:'Liberation Serif', serif;font-size:37.5px;font-weight:700;color:#000;line-height:1;white-space:nowrap;transform:scaleX(1.1755);transform-origin:center top;-webkit-text-stroke:0.5px #000;text-shadow:1px 0 0 #fff,-1px 0 0 #fff,0 1px 0 #fff,0 -1px 0 #fff;">4</div>
<div style="position:absolute;left:1318.78px;top:133.84px;font-family:'Liberation Serif', serif;font-size:37.5px;font-weight:700;color:#000;line-height:1;white-space:nowrap;transform:scaleX(1.1817);transform-origin:center top;-webkit-text-stroke:0.5px #000;text-shadow:1px 0 0 #fff,-1px 0 0 #fff,0 1px 0 #fff,0 -1px 0 #fff;">5</div>
<div style="position:absolute;left:1053.53px;top:606.24px;font-family:'Liberation Serif', serif;font-size:37.5px;font-weight:700;color:#000;line-height:1;white-space:nowrap;transform:scaleX(1.2992);transform-origin:center top;-webkit-text-stroke:0.5px #000;text-shadow:1px 0 0 #fff,-1px 0 0 #fff,0 1px 0 #fff,0 -1px 0 #fff;">6</div>
<div style="position:absolute;left:1090.20px;top:637.53px;font-family:'Liberation Sans', sans-serif;font-size:12px;font-weight:400;color:#222;line-height:1;white-space:nowrap;transform:scaleX(1.0024);transform-origin:left top;">Showing 0 to 0 of 0</div>
<div style="position:absolute;left:188.40px;top:693.23px;font-family:'Liberation Sans', sans-serif;font-size:12px;font-weight:400;color:#444;line-height:1;white-space:nowrap;transform:scaleX(0.9239);transform-origin:left top;">Powered by Accoxi - 2.0.10 © 2018-2023</div>
<div style="position:absolute;left:1127.20px;top:693.33px;font-family:'Liberation Sans', sans-serif;font-size:12px;font-weight:400;color:#444;line-height:1;white-space:nowrap;transform:scaleX(0.8453);transform-origin:left top;">FAQ&#x27;s</div>
<div style="position:absolute;left:1168.60px;top:693.33px;font-family:'Liberation Sans', sans-serif;font-size:12px;font-weight:400;color:#444;line-height:1;white-space:nowrap;transform:scaleX(0.9755);transform-origin:left top;">Support</div>
<div style="position:absolute;left:1223.50px;top:693.33px;font-family:'Liberation Sans', sans-serif;font-size:12px;font-weight:400;color:#444;line-height:1;white-space:nowrap;transform:scaleX(0.9316);transform-origin:left top;">Help</div>
<div style="position:absolute;left:1308.20px;top:690.90px;font-family:'Liberation Sans', sans-serif;font-size:13px;font-weight:400;color:#fff;line-height:1;white-space:nowrap;transform:scaleX(0.8675);transform-origin:left top;">Exit</div>
<div style="position:absolute;left:1073.90px;top:653.72px;font-family:'Liberation Sans', sans-serif;font-size:17.5px;font-weight:400;color:rgba(150,150,150,0.6);line-height:1;white-space:nowrap;transform:scaleX(1.1237);transform-origin:left top;">Activate Windows</div>
<div style="position:absolute;left:1073.50px;top:677.84px;font-family:'Liberation Sans', sans-serif;font-size:13.5px;font-weight:400;color:rgba(150,150,150,0.6);line-height:1;white-space:nowrap;transform:scaleX(1.1027);transform-origin:left top;">Go to Settings to activate Windows.</div>
<svg style="position:absolute;left:0;top:0" width="1366" height="727">
<path d="M557.3 159.8 H561.9 V184.6 H554.7 V166.4 L549.1 167.9 V164.9 C551.5 164.2 553.6 163.2 554.7 162 Z" fill="#000" stroke="#fff" stroke-width="1" paint-order="stroke"/>
<path d="M1255 667 H1273.4 V672.5 L1267.1 692 H1259.1 L1265.4 673 H1255 Z" fill="#000" stroke="#fff" stroke-width="1" paint-order="stroke"/>
</svg>
</div>
</body></html>
